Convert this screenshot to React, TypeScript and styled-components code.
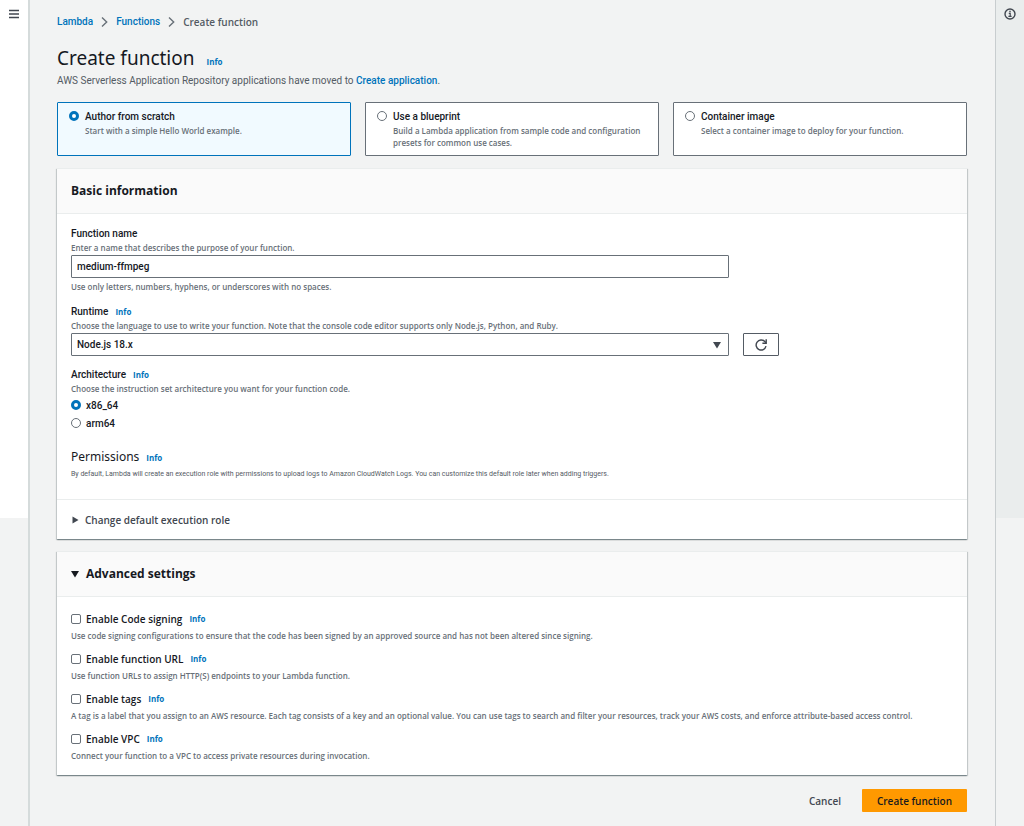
import React, { useState } from "react";
import styled, { createGlobalStyle, css } from "styled-components";

const color = {
  text: "#16191f",
  secondary: "#545b64",
  muted: "#687078",
  icon: "#414750",
  link: "#0073bb",
  border: "#687078",
  page: "#f2f3f3",
  line: "#eaeded",
  orange: "#ff9900",
};

const font = {
  body: `Roboto, "Open Sans", sans-serif`,
  strong: `"Open Sans", "Noto Sans", sans-serif`,
  heading: `"Noto Sans", "Open Sans", sans-serif`,
};

const GlobalStyle = createGlobalStyle`
  *, *::before, *::after { box-sizing: border-box; }
  body {
    margin: 0;
    background: ${color.page};
    color: ${color.text};
    font-family: ${font.body};
    font-size: 10px;
    line-height: 14px;
  }
  h1, h2, h3, p { margin: 0; }
  button, input, select { font: inherit; color: inherit; }
`;

const Shell = styled.div`
  display: flex;
  min-height: 100vh;
`;

const SideRail = styled.aside<{ $side: "left" | "right" }>`
  flex: 0 0 ${(p) => (p.$side === "left" ? 30 : 29)}px;
  ${(p) =>
    p.$side === "left"
      ? css`border-right: 2px solid #d5dbdb;`
      : css`border-left: 1px solid #c8cdcf;`}
`;

const RailPanel = styled.div<{ $tone: string }>`
  display: flex;
  justify-content: center;
  height: 518px;
  padding-top: 7px;
  background: ${(p) => p.$tone};
`;

const RailButton = styled.button`
  display: flex;
  width: 14px;
  height: 14px;
  padding: 0;
  border: 0;
  background: none;
  color: ${color.icon};
`;

const Main = styled.main`
  flex: 1;
  min-width: 0;
  padding: 15px 28px 14px 27px;
`;

const Breadcrumbs = styled.nav`
  display: flex;
  align-items: center;
  gap: 7px;
`;

const Link = styled.a`
  color: ${color.link};
  font-weight: 500;
  text-decoration: none;
`;

const InfoLink = styled(Link)`
  font-family: ${font.strong};
  font-size: 8px;
  line-height: 10px;
  font-weight: 700;
`;

const CurrentCrumb = styled.span`
  color: ${color.secondary};
  font-family: ${font.strong};
  font-weight: 600;
`;

const TitleRow = styled.div`
  display: flex;
  align-items: baseline;
  gap: 12px;
  margin-top: 16px;
`;

const Title = styled.h1`
  font-family: ${font.heading};
  font-size: 19px;
  line-height: 26px;
  font-weight: 400;
`;

const Subtitle = styled.p`
  margin-top: 3px;
  color: ${color.secondary};
`;

const Tiles = styled.div`
  display: grid;
  grid-template-columns: repeat(3, 1fr);
  gap: 14px;
  margin-top: 14px;
`;

const Tile = styled.label<{ $selected: boolean }>`
  display: flex;
  gap: 6px;
  min-height: 54px;
  padding: 6px 11px;
  border: 1px solid ${(p) => (p.$selected ? color.link : color.border)};
  border-radius: 1px;
  background: ${(p) => (p.$selected ? "#f1faff" : "#fff")};
`;

const TileText = styled.span`
  display: flex;
  flex-direction: column;
`;

const Radio = styled.input.attrs({ type: "radio" })`
  flex: none;
  appearance: none;
  width: 10px;
  height: 10px;
  margin: 2px 0 0;
  border: 1px solid ${color.border};
  border-radius: 50%;
  background: #fff;
  &:checked {
    border: 3px solid ${color.link};
  }
`;

const Hint = styled.span`
  display: block;
  color: ${color.muted};
  font-family: ${font.strong};
  font-size: 8px;
  line-height: 12px;
  font-weight: 600;
`;

const Panel = styled.section`
  margin-top: 12px;
  border-top: 1px solid ${color.line};
  background: #fff;
  box-shadow:
    0 1px 1px 0 rgba(0, 28, 36, 0.3),
    1px 1px 1px 0 rgba(0, 28, 36, 0.15),
    -1px 1px 1px 0 rgba(0, 28, 36, 0.15);
`;

const PanelHeader = styled.div`
  display: flex;
  align-items: center;
  gap: 7px;
  height: 45px;
  padding: 0 14px;
  border-bottom: 1px solid ${color.line};
  background: #fafafa;
`;

const PanelTitle = styled.h2`
  font-family: ${font.strong};
  font-size: 12px;
  line-height: 18px;
  font-weight: 700;
`;

const DisclosureButton = styled.button<{ $size: "large" | "small" }>`
  display: flex;
  align-items: center;
  gap: ${(p) => (p.$size === "large" ? 7 : 6)}px;
  padding: 0;
  border: 0;
  background: none;
  color: ${(p) => (p.$size === "large" ? color.text : color.icon)};
  font-family: ${font.strong};
  font-weight: 600;
`;

const PanelBody = styled.div`
  display: flex;
  flex-direction: column;
  gap: 11px;
  padding: 12px 14px 19px;
`;

const Field = styled.div`
  display: flex;
  flex-direction: column;
`;

const LabelRow = styled.div`
  display: flex;
  align-items: baseline;
  gap: 7px;
`;

const FieldLabel = styled.label`
  line-height: 16px;
  font-weight: 500;
`;

const FieldHint = styled(Hint)`
  margin-bottom: 1px;
`;

const ConstraintHint = styled(Hint)`
  margin-top: 3px;
`;

const ControlRow = styled.div`
  display: grid;
  grid-template-columns: repeat(4, 1fr);
  gap: 14px;
  & > :first-child {
    grid-column: span 3;
  }
`;

const controlBox = css`
  width: 100%;
  height: 23px;
  padding: 0 5px;
  border: 1px solid ${color.border};
  border-radius: 1px;
  background: #fff;
  font-weight: 500;
`;

const TextInput = styled.input.attrs({ type: "text" })`
  ${controlBox}
`;

const SelectWrap = styled.div`
  position: relative;
`;

const Select = styled.select`
  ${controlBox}
  display: block;
  appearance: none;
`;

const SelectArrow = styled.svg`
  position: absolute;
  right: 8px;
  top: 8px;
  pointer-events: none;
`;

const RefreshButton = styled.button`
  display: flex;
  align-items: center;
  justify-content: center;
  width: 36px;
  height: 23px;
  padding: 0;
  border: 1px solid ${color.secondary};
  border-radius: 1px;
  background: #fff;
  color: ${color.icon};
`;

const RadioRow = styled.label`
  display: flex;
  gap: 5px;
  padding: 3px 0 1px;
  font-weight: 500;
  ${Radio} {
    margin-top: 1px;
  }
`;

const Permissions = styled.div`
  margin-top: 5px;
`;

const PermissionsTitle = styled.h3`
  font-family: ${font.heading};
  font-size: 12px;
  line-height: 18px;
  font-weight: 400;
`;

const PermissionsText = styled.p`
  margin-top: 2px;
  color: ${color.secondary};
  font-size: 7px;
  line-height: 12px;
`;

const PanelFooter = styled.div`
  padding: 13px 14px 12px;
  border-top: 1px solid ${color.line};
`;

const OptionList = styled.div`
  display: flex;
  flex-direction: column;
  gap: 8px;
  padding: 14px 14px 12px;
`;

const OptionRow = styled.div`
  display: flex;
  align-items: center;
  gap: 7px;
  line-height: 16px;
`;

const OptionLabel = styled.label`
  display: flex;
  align-items: center;
  gap: 5px;
  font-family: ${font.strong};
  font-weight: 600;
`;

const Checkbox = styled.input.attrs({ type: "checkbox" })`
  appearance: none;
  width: 10px;
  height: 10px;
  margin: 0;
  border: 1px solid ${color.border};
  border-radius: 2px;
  background: #fff;
  &:checked {
    background: ${color.link};
  }
`;

const OptionHint = styled(Hint)`
  line-height: 14px;
  margin-top: 2px;
`;

const Actions = styled.div`
  display: flex;
  justify-content: flex-end;
  gap: 6px;
  margin-top: 14px;
`;

const ActionButton = styled.button<{ $primary?: boolean }>`
  height: 23px;
  padding: 0 15px;
  border: 0;
  border-radius: 1px;
  background: ${(p) => (p.$primary ? color.orange : "transparent")};
  color: ${(p) => (p.$primary ? color.text : color.icon)};
  font-family: ${font.strong};
  font-weight: 600;
`;

const MenuIcon = () => (
  <svg width="14" height="14" viewBox="0 0 14 14" stroke="currentColor" strokeWidth="1.3">
    <path d="M2 3.5h10M2 7h10M2 10.5h10" />
  </svg>
);

const InfoIcon = () => (
  <svg width="14" height="14" viewBox="0 0 14 14" fill="none" stroke="currentColor" strokeWidth="1.4">
    <circle cx="7" cy="7" r="5" />
    <path d="M5.8 6.4h1.4v3M5.4 9.4h3.2" strokeWidth="1.2" />
    <path d="M6.3 4.5h1.4" strokeWidth="1.3" />
  </svg>
);

const Chevron = () => (
  <svg width="9" height="12" viewBox="0 0 9 12" fill="none" stroke={color.muted} strokeWidth="1.4">
    <path d="M2 1.5l4.7 4.5L2 10.5" />
  </svg>
);

const RefreshIcon = () => (
  <svg width="14" height="14" viewBox="0 0 14 14" fill="none" stroke="currentColor" strokeWidth="1.4">
    <path d="M12 8.2A5 5 0 1 1 10.8 3.6L12 4.8" />
    <path d="M12.2 1.2v4H8.4" />
  </svg>
);

const Caret = ({ open }: { open: boolean }) => (
  <svg width="8" height="8" viewBox="0 0 8 8" fill="currentColor">
    <path d={open ? "M0 1h8L4 7.5z" : "M1.5 0.5v7L7.5 4z"} />
  </svg>
);

const tiles = [
  { id: "scratch", title: "Author from scratch", text: "Start with a simple Hello World example." },
  {
    id: "blueprint",
    title: "Use a blueprint",
    text: "Build a Lambda application from sample code and configuration presets for common use cases.",
  },
  { id: "container", title: "Container image", text: "Select a container image to deploy for your function." },
];

const options = [
  {
    id: "signing",
    title: "Enable Code signing",
    text: "Use code signing configurations to ensure that the code has been signed by an approved source and has not been altered since signing.",
  },
  {
    id: "url",
    title: "Enable function URL",
    text: "Use function URLs to assign HTTP(S) endpoints to your Lambda function.",
  },
  {
    id: "tags",
    title: "Enable tags",
    text: "A tag is a label that you assign to an AWS resource. Each tag consists of a key and an optional value. You can use tags to search and filter your resources, track your AWS costs, and enforce attribute-based access control.",
  },
  {
    id: "vpc",
    title: "Enable VPC",
    text: "Connect your function to a VPC to access private resources during invocation.",
  },
];

export default function App() {
  const [source, setSource] = useState("scratch");
  const [arch, setArch] = useState("x86_64");
  const [name, setName] = useState("medium-ffmpeg");

  return (
    <>
      <GlobalStyle />
      <Shell>
        <SideRail $side="left">
          <RailPanel $tone="#fff">
            <RailButton aria-label="Open navigation"><MenuIcon /></RailButton>
          </RailPanel>
        </SideRail>
        <Main>
          <Breadcrumbs aria-label="Breadcrumbs">
            <Link href="#lambda">Lambda</Link>
            <Chevron />
            <Link href="#functions">Functions</Link>
            <Chevron />
            <CurrentCrumb>Create function</CurrentCrumb>
          </Breadcrumbs>
          <TitleRow>
            <Title>Create function</Title>
            <InfoLink href="#info">Info</InfoLink>
          </TitleRow>
          <Subtitle>
            AWS Serverless Application Repository applications have moved to{" "}
            <Link href="#application">Create application</Link>.
          </Subtitle>

          <Tiles role="radiogroup" aria-label="Function source">
            {tiles.map((t) => (
              <Tile key={t.id} $selected={source === t.id}>
                <Radio name="source" checked={source === t.id} onChange={() => setSource(t.id)} />
                <TileText>
                  <FieldLabel as="span">{t.title}</FieldLabel>
                  <Hint>{t.text}</Hint>
                </TileText>
              </Tile>
            ))}
          </Tiles>

          <Panel>
            <PanelHeader>
              <PanelTitle>Basic information</PanelTitle>
            </PanelHeader>
            <PanelBody>
              <Field>
                <LabelRow>
                  <FieldLabel htmlFor="fn-name">Function name</FieldLabel>
                </LabelRow>
                <FieldHint>Enter a name that describes the purpose of your function.</FieldHint>
                <ControlRow>
                  <TextInput id="fn-name" value={name} onChange={(e) => setName(e.target.value)} />
                </ControlRow>
                <ConstraintHint>Use only letters, numbers, hyphens, or underscores with no spaces.</ConstraintHint>
              </Field>
              <Field>
                <LabelRow>
                  <FieldLabel htmlFor="runtime">Runtime</FieldLabel>
                  <InfoLink href="#runtime-info">Info</InfoLink>
                </LabelRow>
                <FieldHint>
                  Choose the language to use to write your function. Note that the console code editor supports only
                  Node.js, Python, and Ruby.
                </FieldHint>
                <ControlRow>
                  <SelectWrap>
                    <Select id="runtime" defaultValue="node18">
                      <option value="node18">Node.js 18.x</option>
                    </Select>
                    <SelectArrow width="8" height="8" viewBox="0 0 8 8" fill={color.icon}>
                      <path d="M0 1h8L4 7.5z" />
                    </SelectArrow>
                  </SelectWrap>
                  <RefreshButton aria-label="Refresh runtimes"><RefreshIcon /></RefreshButton>
                </ControlRow>
              </Field>
              <Field role="radiogroup" aria-labelledby="arch-label">
                <LabelRow>
                  <FieldLabel as="span" id="arch-label">Architecture</FieldLabel>
                  <InfoLink href="#arch-info">Info</InfoLink>
                </LabelRow>
                <FieldHint>Choose the instruction set architecture you want for your function code.</FieldHint>
                {["x86_64", "arm64"].map((a) => (
                  <RadioRow key={a}>
                    <Radio name="arch" checked={arch === a} onChange={() => setArch(a)} />
                    {a}
                  </RadioRow>
                ))}
              </Field>
              <Permissions>
                <LabelRow>
                  <PermissionsTitle>Permissions</PermissionsTitle>
                  <InfoLink href="#permissions-info">Info</InfoLink>
                </LabelRow>
                <PermissionsText>
                  By default, Lambda will create an execution role with permissions to upload logs to Amazon CloudWatch
                  Logs. You can customize this default role later when adding triggers.
                </PermissionsText>
              </Permissions>
            </PanelBody>
            <PanelFooter>
              <DisclosureButton $size="small" aria-expanded={false}>
                <Caret open={false} />
                Change default execution role
              </DisclosureButton>
            </PanelFooter>
          </Panel>

          <Panel>
            <PanelHeader>
              <DisclosureButton $size="large" aria-expanded={true}>
                <Caret open />
                <PanelTitle as="span">Advanced settings</PanelTitle>
              </DisclosureButton>
            </PanelHeader>
            <OptionList>
              {options.map((o) => (
                <div key={o.id}>
                  <OptionRow>
                    <OptionLabel>
                      <Checkbox />
                      {o.title}
                    </OptionLabel>
                    <InfoLink href={`#${o.id}-info`}>Info</InfoLink>
                  </OptionRow>
                  <OptionHint>{o.text}</OptionHint>
                </div>
              ))}
            </OptionList>
          </Panel>

          <Actions>
            <ActionButton>Cancel</ActionButton>
            <ActionButton $primary>Create function</ActionButton>
          </Actions>
        </Main>
        <SideRail $side="right">
          <RailPanel $tone="#eaeded">
            <RailButton aria-label="Open help panel"><InfoIcon /></RailButton>
          </RailPanel>
        </SideRail>
      </Shell>
    </>
  );
}
